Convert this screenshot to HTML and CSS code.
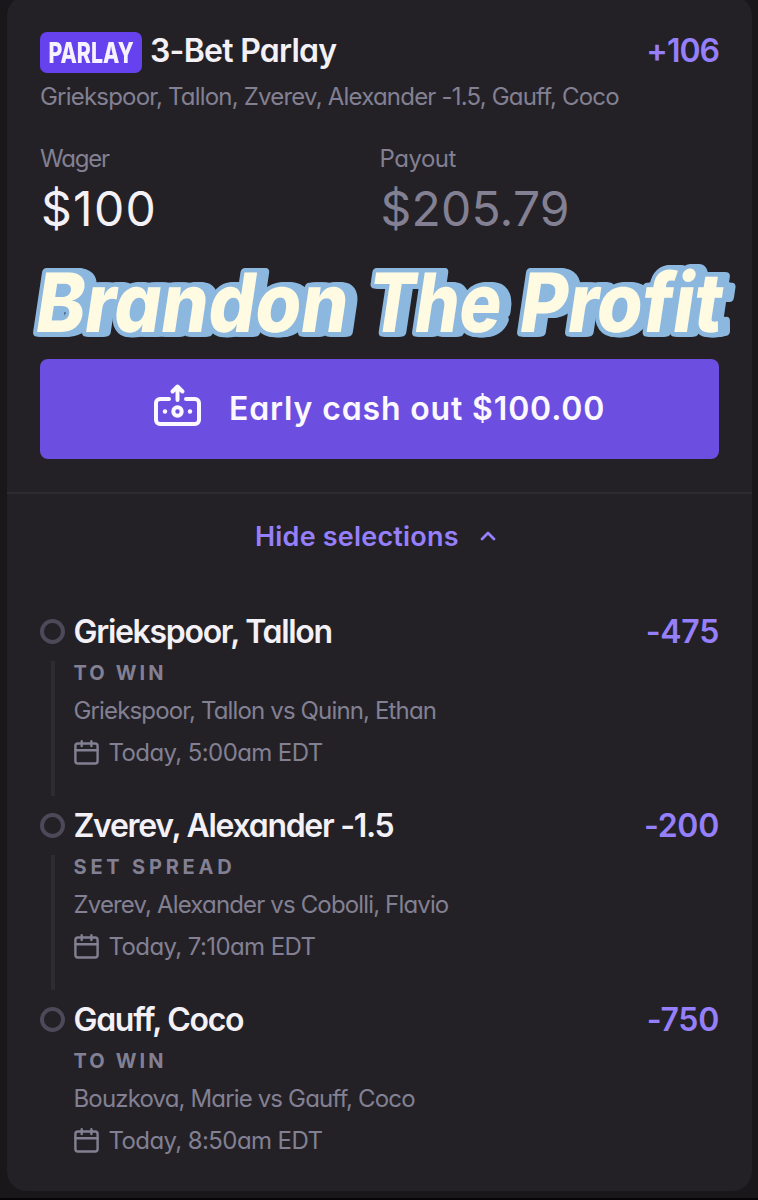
FILE: index.html
```html
<!DOCTYPE html>
<html lang="en">
<head>
    <meta charset="UTF-8">
    <meta name="viewport" content="width=device-width, initial-scale=1.0">
    <title>3-Bet Parlay</title>
    <link rel="stylesheet" href="styles.css">
</head>
<body>
    <svg width="0" height="0" class="sprite">
        <symbol id="calendar" viewBox="0 0 26 26">
            <g fill="none" stroke="currentColor" stroke-width="2.4" stroke-linecap="round">
                <rect x="1.4" y="3.500" width="22.2" height="20" rx="2.5"/>
                <path d="M1.4 10.200h22.200M7.700 1.300v4.800M17.400 1.300v4.800"/>
            </g>
        </symbol>
    </svg>
    <main class="card">
        <section class="summary">
            <div class="title-row">
                <div class="badge"><span>PARLAY</span></div>
                <h1>3-Bet Parlay</h1>
                <span class="odds total">+106</span>
            </div>
            <p class="names">Griekspoor, Tallon, Zverev, Alexander -1.5, Gauff, Coco</p>
            <div class="amounts">
                <div>
                    <div class="label wager-label">Wager</div>
                    <div class="amount wager">$100</div>
                </div>
                <div>
                    <div class="label payout-label">Payout</div>
                    <div class="amount payout">$205.79</div>
                </div>
            </div>
            <svg class="brand" width="712" height="80" viewBox="0 0 712 80">
                <g transform="translate(0 70) skewX(-8.5)">
                    <text x="-6" y="0" textLength="312" lengthAdjust="spacingAndGlyphs">Brandon</text>
                    <text x="326" y="0" textLength="133" lengthAdjust="spacingAndGlyphs">The</text>
                    <text x="478" y="0" textLength="202" lengthAdjust="spacingAndGlyphs">Profit</text>
                </g>
                <circle cx="26" cy="51" r="0.8" fill="#24506e"/>
            </svg>
            <button class="cashout">
                <svg width="48" height="46" viewBox="0 0 48 46" fill="none" stroke="currentColor" stroke-width="4" stroke-linecap="round" stroke-linejoin="round">
                    <path d="M16 16H7a4 4 0 0 0-4 4v17a4 4 0 0 0 4 4h35a4 4 0 0 0 4-4V20a4 4 0 0 0-4-4h-9M24.500 17V4M19.500 8.500l5-5 5 5"/>
                    <circle cx="24.500" cy="28.500" r="4.200"/>
                    <circle cx="12" cy="28.500" r="2.200" fill="currentColor" stroke="none"/>
                    <circle cx="37" cy="28.500" r="2.200" fill="currentColor" stroke="none"/>
                </svg>
                <span>Early cash out $100.00</span>
            </button>
        </section>

        <div class="toggle">
            <span>Hide selections</span>
            <svg width="18" height="12" viewBox="0 0 18 12" fill="none" stroke="currentColor" stroke-width="2.800" stroke-linecap="round" stroke-linejoin="round"><path d="M3 9l6-6 6 6"/></svg>
        </div>

        <section class="legs">
            <div class="leg">
                <div class="marker"></div>
                <div class="info">
                    <h2>Griekspoor, Tallon</h2>
                    <div class="market">TO WIN</div>
                    <div class="match">Griekspoor, Tallon vs Quinn, Ethan</div>
                    <div class="date"><svg width="26" height="26"><use href="#calendar"/></svg><span>Today, 5:00am EDT</span></div>
                </div>
                <span class="odds">-475</span>
            </div>
            <div class="leg">
                <div class="marker"></div>
                <div class="info">
                    <h2>Zverev, Alexander -1.5</h2>
                    <div class="market spread">SET SPREAD</div>
                    <div class="match">Zverev, Alexander vs Cobolli, Flavio</div>
                    <div class="date"><svg width="26" height="26"><use href="#calendar"/></svg><span>Today, 7:10am EDT</span></div>
                </div>
                <span class="odds">-200</span>
            </div>
            <div class="leg">
                <div class="marker"></div>
                <div class="info">
                    <h2>Gauff, Coco</h2>
                    <div class="market">TO WIN</div>
                    <div class="match">Bouzkova, Marie vs Gauff, Coco</div>
                    <div class="date"><svg width="26" height="26"><use href="#calendar"/></svg><span>Today, 8:50am EDT</span></div>
                </div>
                <span class="odds">-750</span>
            </div>
        </section>
    </main>
</body>
</html>
```
FILE: styles.css
```css
* {
    box-sizing: border-box;
}
body {
    margin: 0;
    height: 1200px;
    overflow: hidden;
    background: #19171a;
    border-bottom: 2px solid #060507;
    font-family: Inter, "Liberation Sans", sans-serif;
    /* single-storey a */
    font-feature-settings: "cv11";
    color: #828092;
    white-space: nowrap;
}
.sprite {
    display: block;
}
h1, h2, p {
    margin: 0;
}
.card {
    display: flow-root;
    height: 1195px;
    margin: -4px 6px 0 7px;
    background: #232126;
    border-radius: 20px;
}
.summary {
    padding: 36px 33px 33px;
    border-bottom: 2px solid #2d2b31;
}
.title-row {
    display: flex;
    height: 41px;
}
.badge {
    display: flex;
    justify-content: center;
    width: 102px;
    height: 41px;
    margin-right: 8px;
    border-radius: 7px;
    background: #6642ee;
    color: #f6f2ff;
    font-size: 28px;
    font-weight: 800;
    line-height: 42px;
}
.badge span {
    transform: scaleX(0.76);
}
h1 {
    font-size: 32px;
    font-weight: 600;
    line-height: 37px;
    color: #f3f0f6;
    letter-spacing: -0.75px;
}
.odds {
    margin-left: auto;
    color: #967ffb;
    font-size: 32px;
    font-weight: 600;
    line-height: 40px;
    letter-spacing: -0.3px;
}
.total {
    line-height: 37px;
    letter-spacing: -1px;
}
.names {
    margin-top: 9px;
    font-size: 24px;
    line-height: 30px;
    letter-spacing: -0.8px;
}
.amounts {
    display: grid;
    grid-template-columns: 1fr 1fr;
    margin-top: 32px;
}
.label {
    font-size: 24px;
    line-height: 30px;
}
.wager-label {
    letter-spacing: -1.2px;
}
.payout-label {
    letter-spacing: -0.5px;
}
.amount {
    margin-top: 10px;
    padding-left: 1px;
    font-size: 48px;
    line-height: 50px;
}
.wager {
    color: #f3f0f6;
    letter-spacing: 1.3px;
}
.payout {
    letter-spacing: 0.2px;
}
.brand {
    display: block;
    margin: 28px 0 17px -1px;
    overflow: visible;
    font-size: 82px;
    font-weight: 800;
    fill: #fffbe2;
    /* thick outline, then dragged to the right */
    filter: drop-shadow(2px 0 0 #8cb8df) drop-shadow(3px 0 0 #8cb8df) drop-shadow(3px 0 0 #8cb8df);
}
.brand text {
    stroke: #8cb8df;
    stroke-width: 9px;
    stroke-linejoin: round;
    paint-order: stroke fill;
}
.cashout {
    display: flex;
    align-items: center;
    justify-content: flex-start;
    gap: 28px;
    width: 100%;
    height: 100px;
    padding: 0 0 1px 113px;
    border: none;
    border-radius: 8px;
    background: #6c4fe0;
    color: #fcf8ff;
    font: inherit;
    font-size: 32px;
    font-weight: 600;
    letter-spacing: 0.85px;
}
.cashout svg {
    margin-top: -5px;
}
.toggle {
    display: flex;
    align-items: center;
    gap: 20px;
    height: 84px;
    padding-left: 248px;
    color: #967ffb;
    font-size: 27px;
    font-weight: 600;
    letter-spacing: 0.2px;
}
.legs {
    padding: 34px 33px 0;
}
.leg {
    display: flex;
    height: 194px;
}
.marker {
    display: flex;
    flex-direction: column;
    align-items: center;
    width: 25px;
    margin-right: 8.5px;
    padding-top: 7px;
}
.marker::before {
    content: "";
    box-sizing: border-box;
    width: 25px;
    height: 25px;
    border: 4px solid #4c4959;
    border-radius: 50%;
}
.marker::after {
    content: "";
    width: 4px;
    height: 135px;
    margin-top: 17px;
    background: #2e2c33;
}
.leg:last-child .marker::after {
    display: none;
}
h2 {
    font-size: 32px;
    font-weight: 600;
    line-height: 40px;
    color: #f3f0f6;
    letter-spacing: -1.3px;
}
.market {
    margin-top: 8px;
    font-size: 20px;
    font-weight: 700;
    line-height: 27px;
    letter-spacing: 3.1px;
}
.spread {
    letter-spacing: 3.8px;
}
.match {
    margin-top: 9px;
    font-size: 24px;
    line-height: 30px;
    letter-spacing: -0.85px;
}
.date {
    display: flex;
    align-items: center;
    gap: 9px;
    margin-top: 12px;
    font-size: 24px;
    line-height: 30px;
    letter-spacing: -0.6px;
}
```
